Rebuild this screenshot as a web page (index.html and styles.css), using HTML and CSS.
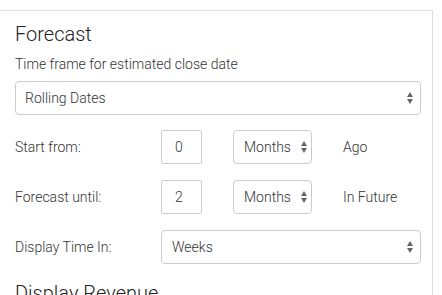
FILE: index.html
```html
<!DOCTYPE html>
<html lang="en">
<head>
  <meta charset="UTF-8">
  <title>Forecast</title>
  <link rel="stylesheet" href="styles.css">
</head>
<body>
  <section class="panel">
    <h2>Forecast</h2>
    <p class="field-label">Time frame for estimated close date</p>
    <div class="select wide">
      <span>Rolling Dates</span>
      <svg class="arrows" width="6" height="12" viewBox="0 0 6 12"><path d="M3 0 L6 5 L0 5 Z M3 12 L6 7 L0 7 Z" fill="#666"/></svg>
    </div>

    <div class="row">
      <label>Start from:</label>
      <div class="num">0</div>
      <div class="select unit">
        <span>Months</span>
        <svg class="arrows" width="6" height="12" viewBox="0 0 6 12"><path d="M3 0 L6 5 L0 5 Z M3 12 L6 7 L0 7 Z" fill="#666"/></svg>
      </div>
      <span class="suffix">Ago</span>
    </div>

    <div class="row">
      <label>Forecast until:</label>
      <div class="num">2</div>
      <div class="select unit">
        <span>Months</span>
        <svg class="arrows" width="6" height="12" viewBox="0 0 6 12"><path d="M3 0 L6 5 L0 5 Z M3 12 L6 7 L0 7 Z" fill="#666"/></svg>
      </div>
      <span class="suffix">In Future</span>
    </div>

    <div class="row span">
      <label>Display Time In:</label>
      <div class="select">
        <span>Weeks</span>
        <svg class="arrows" width="6" height="12" viewBox="0 0 6 12"><path d="M3 0 L6 5 L0 5 Z M3 12 L6 7 L0 7 Z" fill="#666"/></svg>
      </div>
    </div>

    <h2 class="next">Display Revenue</h2>
  </section>
</body>
</html>
```

FILE: styles.css
```css
*{box-sizing:border-box;margin:0;padding:0;}
html,body{height:100%;overflow:hidden;}
body{
  font-family:Roboto, 'Noto Sans', sans-serif;
  font-weight:300;
  background:#fff;
  color:#333;
  font-size:14px;
}
.panel{
  margin-top:10px;
  width:433px;
  border-top:1px solid #ddd;
  border-right:1px solid #ddd;
  padding:11px 11px 40px 15px;
}
h2{font-size:20px;font-weight:300;line-height:24px;color:#222;}
.field-label{margin-top:9px;line-height:18px;}
.select{
  height:34px;
  border:1px solid #ccc;
  border-radius:4px;
  display:flex;
  align-items:center;
  justify-content:space-between;
  padding:0 7px 0 9px;
}
.wide{margin-top:8px;}
.arrows{flex:none;}
.row{
  display:grid;
  grid-template-columns:146px 72px 79px auto;
  align-items:center;
  margin-top:15px;
}
.row + .row{margin-top:16px;}
.num{
  width:41px;
  height:34px;
  border:1px solid #ccc;
  border-radius:2px;
  display:flex;
  align-items:center;
  padding-left:13px;
}
.unit{padding:0 4px 0 10px;}
.suffix{padding-left:31px;}
.span{grid-template-columns:146px 1fr;}
.span .select{padding-left:10px;}
.next{margin-top:17px;}
```
